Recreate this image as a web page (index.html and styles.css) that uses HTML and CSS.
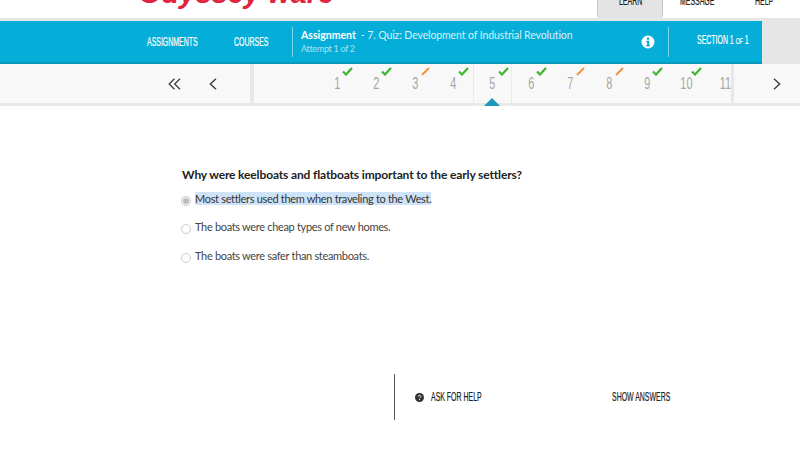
FILE: index.html
```html
<!DOCTYPE html>
<html lang="en">
<head>
    <meta charset="UTF-8">
    <title>Assignment - 7. Quiz: Development of Industrial Revolution</title>
    <link rel="stylesheet" href="styles.css">
</head>
<body>
    <header class="top">
        <div class="logo">Odyssey ware</div>
        <nav class="top-tabs">
            <a class="tab tab-active"><span class="narrow">LEARN</span></a>
            <a class="tab tab-message"><span class="narrow">MESSAGE</span></a>
            <a class="tab tab-help"><span class="narrow">HELP</span></a>
        </nav>
    </header>

    <div class="bluebar">
        <div class="blue-main">
            <a class="blue-link link-assign"><span class="narrow">ASSIGNMENTS</span></a>
            <a class="blue-link link-courses"><span class="narrow">COURSES</span></a>
            <div class="assign-info">
                <p class="assign-title"><strong>Assignment</strong><span>- 7. Quiz: Development of Industrial Revolution</span></p>
                <p class="assign-attempt">Attempt 1 of 2</p>
            </div>
            <svg class="info-icon" width="14" height="14" viewBox="0 0 14 14">
                <circle cx="7" cy="7" r="6.5" fill="#fff"/>
                <rect x="5.9" y="2.6" width="2.3" height="2.1" fill="#05aed9"/>
                <path d="M5.2 5.8h3v4.1h.9v1.3H5.2V9.9h.9V7.1h-.9z" fill="#05aed9"/>
            </svg>
            <div class="section-label"><span class="narrow">SECTION 1 <small>OF</small> 1</span></div>
        </div>
        <div class="quest"><span class="narrow">QUESTIONS</span></div>
    </div>

    <div class="stepper">
        <div class="step-left">
            <svg width="13" height="12" viewBox="0 0 13 12" fill="none" stroke="#444" stroke-width="1.4">
                <path d="M6.5 .8 1.2 6l5.3 5.2M12 .8 6.7 6l5.3 5.2"/>
            </svg>
            <svg width="8" height="12" viewBox="0 0 8 12" fill="none" stroke="#444" stroke-width="1.5">
                <path d="M7 .8 1.4 6 7 11.2"/>
            </svg>
        </div>
        <div class="steps" id="steps"></div>
        <div class="step-right">
            <svg width="8" height="12" viewBox="0 0 8 12" fill="none" stroke="#444" stroke-width="1.5">
                <path d="M1 .8 6.6 6 1 11.2"/>
            </svg>
        </div>
    </div>

    <main class="quiz">
        <h2 class="question">Why were keelboats and flatboats important to the early settlers?</h2>
        <div class="option option-picked"><span class="radio"></span><span class="option-text">Most settlers used them when traveling to the West.</span></div>
        <div class="option"><span class="radio"></span><span class="option-text">The boats were cheap types of new homes.</span></div>
        <div class="option"><span class="radio"></span><span class="option-text">The boats were safer than steamboats.</span></div>
    </main>

    <div class="actions">
        <div class="ask">
            <svg width="9" height="9" viewBox="0 0 9 9">
                <circle cx="4.5" cy="4.5" r="4.5" fill="#333"/>
                <path d="M3.2 3.5c0-1.600 2.700-1.600 2.700 0 0 .9-1.300 .9-1.300 1.700" fill="none" stroke="#fff" stroke-width=".9"/>
                <rect x="4.100" y="6" width="1" height="1" fill="#fff"/>
            </svg>
            <span class="narrow">ASK FOR HELP</span>
        </div>
        <div class="show"><span class="narrow">SHOW ANSWERS</span></div>
    </div>

    <script src="steps.js"></script>
</body>
</html>
```

FILE: styles.css
```css
* {
    margin: 0;
    padding: 0;
    box-sizing: border-box;
}

html, body {
    width: 800px;
    height: 450px;
    overflow: hidden;
}

body {
    background: white;
    font-family: Lato, "Open Sans", sans-serif;
    color: #333;
}

/* no condensed face installed, so squeeze the labels */
.narrow {
    display: block;
    width: 0;
    font-family: "Liberation Sans", sans-serif;
    font-size: 12px;
    line-height: 14px;
    white-space: nowrap;
    -webkit-text-stroke: 0.2px;
    transform: scaleX(0.58);
    transform-origin: left center;
}

/* top strip */
.top {
    height: 18px;
    display: flex;
    justify-content: space-between;
    overflow: hidden;
}

.logo {
    margin: -26px 0 0 139px;
    font-family: "Liberation Sans", sans-serif;
    font-size: 29px;
    line-height: 38px;
    height: 38px;
    font-weight: bold;
    font-style: italic;
    white-space: nowrap;
    color: #e0233f;
}

.top-tabs {
    display: flex;
    width: 203px;
}

.tab {
    margin-top: -6px;
    color: #222;
}

.tab-active {
    width: 66px;
    height: 24px;
    padding: 0 0 0 21px;
    background: #e4e4e4;
    border-left: 1px solid #c8c8c8;
    border-right: 1px solid #c8c8c8;
    border-radius: 0 0 3px 3px;
}

.tab-message {
    margin-left: 17px;
    width: 75px;
}

.tab-help {
    width: 45px;
}

/* blue bar */
.bluebar {
    height: 46px;
    display: flex;
    padding-top: 3px;
    background: #e6e6e6;
}

.blue-main {
    flex: 0 0 762px;
    display: flex;
    align-items: center;
    background: #05aed9;
    border-bottom: 2px solid #0a97ba;
    color: white;
}

.link-assign {
    flex: 0 0 87px;
    margin-left: 147px;
}

.link-courses {
    flex: 0 0 58px;
}

.assign-info {
    flex: 0 0 334px;
    height: 30px;
    padding: 1px 0 0 8px;
    border-left: 1px solid #7fd5ea;
}

.assign-title {
    font-size: 10.500px;
    line-height: 14px;
    white-space: nowrap;
    color: #d5f1f9;
}

.assign-title strong {
    color: white;
    margin-right: 5px;
}

.assign-title span {
    letter-spacing: -0.1px;
}

.assign-attempt {
    font-size: 9px;
    line-height: 14px;
    letter-spacing: -0.3px;
    color: #a8e2f1;
}

.info-icon {
    flex: 0 0 14px;
    margin-left: 15px;
}

.section-label {
    display: flex;
    align-items: center;
    margin-left: 13px;
    padding: 0 0 2px 28px;
    height: 30px;
    border-left: 1px solid #7fd5ea;
}

.section-label small {
    font-size: 9px;
}

.quest {
    padding: 12px 0 0 18px;
    color: #555;
    overflow: hidden;
}

/* question stepper */
.stepper {
    height: 42px;
    display: flex;
    background: #f8f8f8;
    border-bottom: 3px solid #e8e8e8;
}

.step-left {
    width: 250px;
    display: flex;
    align-items: center;
    padding-left: 168px;
    gap: 28px;
}

.steps {
    width: 484px;
    display: flex;
    padding-left: 64px;
    border-left: 4px solid #e8e8e8;
    border-right: 3px solid #e8e8e8;
}

.step {
    position: relative;
    flex: 0 0 38.800px;
    color: #a6a6a6;
}

.step .narrow {
    width: auto;
    font-size: 16px;
    line-height: 40px;
    text-align: center;
    -webkit-text-stroke: 0;
    transform: scaleX(0.68);
    transform-origin: center center;
}

.step svg {
    position: absolute;
    top: 3px;
    left: 24px;
}

.step-current {
    height: 42px;
    border-left: 1px solid #e8ecec;
    border-right: 1px solid #e8ecec;
    border-bottom: 1px solid #e8ecec;
}

.step-current::after {
    content: "";
    position: absolute;
    left: 10px;
    bottom: -1px;
    border-left: 8px solid transparent;
    border-right: 8px solid transparent;
    border-bottom: 8px solid #1c98bd;
}

.step-right {
    flex: 1;
    display: flex;
    align-items: center;
    padding-left: 39px;
}

/* quiz */
.quiz {
    padding: 60px 0 0 182px;
}

.question {
    font-size: 12px;
    line-height: 18px;
    font-weight: bold;
    letter-spacing: -0.14px;
    color: #222;
    margin-bottom: 7px;
}

.option {
    display: flex;
    align-items: center;
    height: 14px;
    margin-bottom: 14.500px;
    font-size: 11px;
    letter-spacing: -0.32px;
    color: #444;
}

.radio {
    width: 10px;
    height: 10px;
    margin: 5px 4px 0 -1px;
    border: 1px solid #ccc;
    border-radius: 50%;
    background: white;
}

.option-picked .radio {
    background: #bbb;
    box-shadow: inset 0 0 0 1px white;
}

.option-picked .option-text {
    background: #cfe3f8;
    color: #333;
}

/* bottom actions */
.actions {
    position: absolute;
    left: 394px;
    top: 374px;
    width: 300px;
    height: 46px;
    display: flex;
    align-items: center;
    border-left: 1px solid #555;
    color: #222;
}

.ask {
    flex: 0 0 217px;
    padding-left: 20px;
    display: flex;
    align-items: center;
    gap: 7px;
}
```

FILE: steps.js
```js
// question numbers with their mark, ok = green check, todo = orange dash
const marks = ['ok', 'ok', 'todo', 'ok', 'ok', 'ok', 'todo', 'todo', 'ok', 'ok', ''];
const steps = document.getElementById('steps');

marks.forEach((mark, i) => {
    const step = document.createElement('div');
    step.className = i === 4 ? 'step step-current' : 'step';
    step.innerHTML = `<span class="narrow">${i + 1}</span>`;
    if (mark === 'ok') {
        step.innerHTML += '<svg width="11" height="9" viewBox="0 0 11 9" fill="none" stroke="#3db52e" stroke-width="2.2"><path d="M1 4.500 4 7.500 10 1"/></svg>';
    } else if (mark === 'todo') {
        step.innerHTML += '<svg width="11" height="9" viewBox="0 0 11 9" fill="none" stroke="#f0953a" stroke-width="2"><path d="M2 8 9 1"/></svg>';
    }
    steps.appendChild(step);
});
```
